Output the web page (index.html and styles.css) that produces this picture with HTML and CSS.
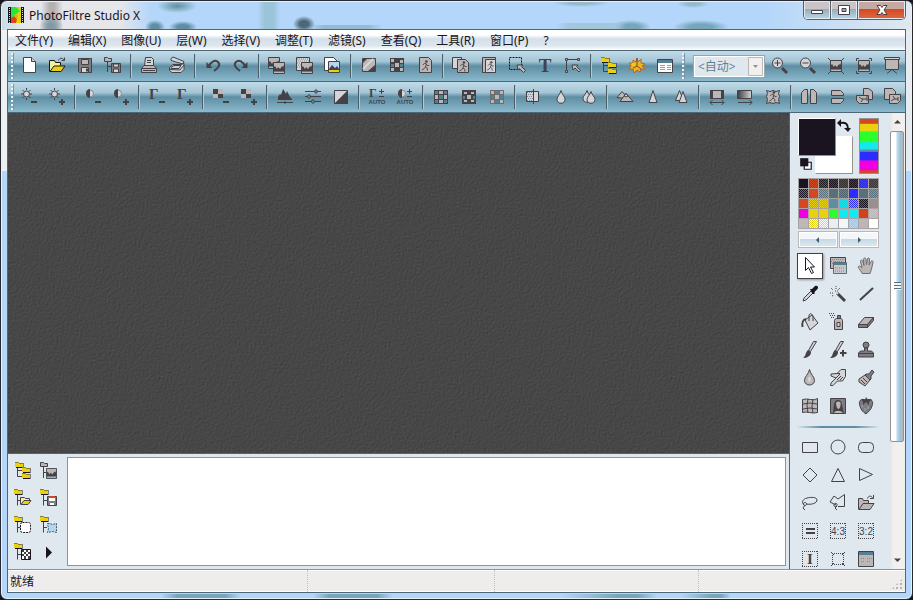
FILE: index.html
```html
<!DOCTYPE html>
<html lang="zh-CN">
<head>
<meta charset="UTF-8" />
<meta name="viewport" content="width=device-width, initial-scale=1.0" />
<title>PhotoFiltre Studio X</title>
<link rel="stylesheet" href="styles.css">
</head>
<body>
<svg class="sprite" aria-hidden="true">
  <defs>
    <linearGradient id="fade" x1="0" x2="1"><stop offset="0" stop-color="#3d3b40"/><stop offset="1" stop-color="#d5d5d8"/></linearGradient>
    <filter id="grain" x="0" y="0" width="100%" height="100%" color-interpolation-filters="sRGB">
      <feTurbulence type="fractalNoise" baseFrequency="0.5" numOctaves="2" seed="4" result="n"/>
      <feDiffuseLighting in="n" surfaceScale="0.3" lighting-color="#646464"><feDistantLight azimuth="225" elevation="45"/></feDiffuseLighting>
    </filter>
  </defs>

  <!-- small parts shared by several icons -->
  <symbol id="man" viewBox="0 0 10 12"><circle class="dark" cx="6" cy="1.6" r="1.4"/><path class="line" d="M2 5.5 4 3.5 6 4.2 5 7.5 7 9V11.5M5 7.5 3.5 9.5 1 11M6 4.5 7 6 9 6"/></symbol>
  <symbol id="pic" viewBox="0 0 12 12"><path d="M.5 .5h11v11H.5z"/><path class="dark" d="M1 9V5l1-1 2 3 1-2 2 2 2-3 1 1 1-2v6z"/><path class="steel" d="M1 9h10v1H1z"/></symbol>
  <symbol id="folder" viewBox="0 0 9 6"><path class="black" d="M1 1h7.500v5H1z"/><path class="yellow-flat" d="M0 .5h3.500l1 1h3.500v3.500H0z"/><path class="shade" d="M0 .5h3.500l1 1h3.500"/></symbol>
  <symbol id="tree-folder" viewBox="0 0 20 20"><use href="#folder" x="1" y="1" width="9" height="6"/><path class="line" d="M4.500 7V17.500M4.500 12.500H8"/></symbol>
  <symbol id="minus" viewBox="0 0 20 20"><path class="dark" d="M12 14h6v2h-6z"/></symbol>
  <symbol id="plus" viewBox="0 0 20 20"><path class="dark" d="M12 14h2v-2h2v2h2v2h-2v2h-2v-2h-2z"/></symbol>

  <!-- file -->
  <symbol id="new" viewBox="0 0 20 20"><path class="white" d="M4.500 1.500h8l4 4v11h-12z"/><path class="pale" d="M12.500 1.500v4h4"/></symbol>
  <symbol id="open" viewBox="0 0 20 20"><path class="cream ink" d="M2.500 15.500v-11h5l1 2h5v3"/><path class="yellow ink" d="m3 15.500 4-5.500h11l-4 5.500z"/><path class="line" d="M11.500 4.500c1-3 4-3 6 0M17.500 1.500v3h-3"/></symbol>
  <symbol id="save" viewBox="0 0 20 20"><path class="mid" d="M3.500 2.500h13v14h-12l-1-1z"/><path d="M6.500 3.500h7v5h-7z"/><path class="pale" d="M6.500 11.500h7v5h-7z"/><path class="dark" d="M11 12.500h2v3h-2z"/></symbol>
  <symbol id="save-tree" viewBox="0 0 20 20"><path d="M1.500 1.500h3l1 1h3v3h-7z"/><path class="line" d="M4.500 6v10M4.500 10.500h4"/><path class="mid" d="M8.500 7.500h9v9h-9z"/><path class="pale" d="M10.500 8h5v3h-5zM10.500 13h5v3.500h-5z"/></symbol>
  <symbol id="print" viewBox="0 0 20 20"><path class="pale" d="m5.500 9.500 1-8h6l2 2v6"/><path class="line" d="M8 4.500h4M8 6.500h4"/><path d="M2.500 12.500 5 9.500h10l2.500 3v4h-15z"/><path class="line" d="M2.500 12.500h15M4 14.500h12"/></symbol>
  <symbol id="scan" viewBox="0 0 20 20"><path class="pale" d="M4 2.500 6 1 17 5.500l-1 2.500L4 4.500z"/><path class="pale" d="M2.500 11.500 6 8.500h8l3-1v6l-3 3h-9l-2.500-2z"/><path class="sky" d="M4 11.500 7 9.500h7l-2 3H4z"/><path class="line" d="m3 13.500 10 .5 4-5"/></symbol>
  <symbol id="undo" viewBox="0 0 20 20"><path class="thick" d="M6 10C8 6 12 3 15 6s0 6-4 9"/><path class="dark" d="M3.500 6v6h6z"/></symbol>
  <symbol id="redo" viewBox="0 0 20 20"><path class="thick" d="M14 10C12 6 8 3 5 6s0 6 4 9"/><path class="dark" d="M16.500 6v6h-6z"/></symbol>

  <!-- image -->
  <symbol id="copy-image" viewBox="0 0 20 20"><use href="#pic" x="1" y="1" width="12" height="12"/><use href="#pic" x="6" y="6" width="12" height="12"/></symbol>
  <symbol id="copy-mask" viewBox="0 0 20 20"><path class="pale" d="M1.500 1.500h13v13h-13z"/><path class="dots soft" d="M2 3h12M3 5h12M2 7h12M3 9h12M2 11h12"/><use href="#pic" x="6" y="6" width="12" height="12"/></symbol>
  <symbol id="paste-image" viewBox="0 0 20 20"><path class="white" d="M1.500 1.500h9l4 4v9h-13z"/><path class="sky" d="M5.500 5.500h11v11h-11z"/><path class="dark" d="m6 13 3-4 3 3 2-2 2 3v1H6z"/><path class="yellow-flat" d="M6 14h10v2H6z"/></symbol>
  <symbol id="gradient" viewBox="0 0 20 20"><path d="M3.500 2.500h13v13h-13z"/><path class="dark" d="M4 3h4L4 7zM16 9v6h-7z"/><path class="pale-line" d="M4 13 14 3"/></symbol>
  <symbol id="squares" viewBox="0 0 20 20"><path class="dark" d="M3 2h14v14H3z"/><path class="flat" d="M4 3h3v3H4zM8 7h4v4H8zM13 4h3v3h-3zM4 12h3v3H4zM13 12h3v3h-3z"/><path class="steel" d="M4 8h3v3H4zM13 8h3v3h-3z"/></symbol>
  <symbol id="automate" viewBox="0 0 20 20"><path d="M4.500 1.500h9l3 3v12h-12z"/><use href="#man" x="5" y="4" width="11" height="11"/></symbol>
  <symbol id="batch" viewBox="0 0 20 20"><path class="pale" d="M1.500 1.500h9v11h-9z"/><path d="M6.500 3.500h8l3 3v10h-11z"/><use href="#man" x="7" y="5" width="10" height="11"/></symbol>
  <symbol id="batch-frame" viewBox="0 0 20 20"><path d="M3.500 1.500h13v15h-13z"/><path class="pale" d="M6.500 3.500h10v13h-10z"/><use href="#man" x="7" y="5" width="9" height="10"/></symbol>
  <symbol id="select-area" viewBox="0 0 20 20"><path class="dash" d="M2.500 1.500h12v12h-12z"/><path d="M10 9h6l-1.500 1.500 4 4-2 2-4-4L11 14z"/></symbol>
  <symbol id="path" viewBox="0 0 20 20"><path class="line" d="M3.500 16V3.500H16"/><path d="M2.500 2.500h2v2h-2zM14.500 2.500h2v2h-2zM2.500 14.500h2v2h-2z"/><path d="M9 9h6l-1.500 1.500 4 4-1.500 1.500-4-4L10 14z"/></symbol>
  <symbol id="explorer" viewBox="0 0 20 20"><use href="#folder" x="2" y="1" width="9" height="6"/><use href="#folder" x="9" y="6" width="9" height="6"/><use href="#folder" x="9" y="12" width="9" height="6"/><path class="line" d="M4.500 7v8.500H9M4.500 9.500H9"/></symbol>
  <symbol id="plugin" viewBox="0 0 20 20"><path class="gold" d="m10 2 1 4 3-3 0 4 4 1-3 2 3 3-4 0-1 3-3-2-3 3-1-4-4 0 2-3-2-3 4 0 0-3 3 2z"/><path class="brown-line" d="M10 2v8l4 3M10 10l-4 2"/><path class="yellow-flat" d="M5 7h3v3H5z"/></symbol>
  <symbol id="layout" viewBox="0 0 20 20"><path class="white" d="M2.500 3.500h15v13h-15z"/><path class="steel" d="M3 4h14v3H3z"/><path class="blue-line" d="M5 9.500h5M5 11.500h5M5 13.500h5M12 9.500h4M12 11.500h4M12 13.500h4"/></symbol>
  <symbol id="zoom-in" viewBox="0 0 20 20"><path class="heavy" d="m12 12 5 5"/><circle class="pale" cx="7.500" cy="7" r="5"/><path class="line" d="M4.500 7h6M7.500 4v6"/></symbol>
  <symbol id="zoom-out" viewBox="0 0 20 20"><path class="heavy" d="m12 12 5 5"/><circle class="pale" cx="7.500" cy="7" r="5"/><path class="line" d="M4.500 7h6"/></symbol>
  <symbol id="fit" viewBox="0 0 20 20"><use href="#pic" x="4" y="4" width="12" height="12"/><path class="line" d="m2 2 3 3M18 2l-3 3M2 18l3-3M18 18l-3-3"/></symbol>
  <symbol id="full" viewBox="0 0 20 20"><use href="#pic" x="4" y="4" width="12" height="12"/><path class="line" d="M2.500 5V2.500H5M15 2.500h2.500V5M2.500 15v2.500H5M15 17.500h2.500V15"/></symbol>
  <symbol id="slideshow" viewBox="0 0 20 20"><path d="M3.500 3.500h13v10h-13z"/><path class="pale" d="M2.500 1.500h15v2h-15z"/><path class="line" d="m10 13.500-5 4M10 13.500l5 4"/></symbol>

  <!-- adjust -->
  <symbol id="sun" viewBox="0 0 20 20"><circle class="pale" cx="7.500" cy="7" r="3"/><path class="line" d="M7.500 1v2M7.500 11v2M2 7h2M11 7h2M3.500 3 5 4.500M11.500 3 10 4.500M3.500 11 5 9.500M11.500 11 10 9.500"/></symbol>
  <symbol id="half" viewBox="0 0 20 20"><circle class="pale thin" cx="7" cy="6.500" r="3.500"/><path class="dark" d="M7 2a4 4.500 0 0 0 0 9z"/></symbol>
  <symbol id="tiles" viewBox="0 0 20 20"><path class="dark" d="M2 2h5v5H2zM7 7h5v4H7z"/><path class="flat" d="M7 2h5v5H7zM2 7h5v4H2z"/></symbol>
  <symbol id="histogram" viewBox="0 0 20 20"><path class="dark" d="M3 13V10l2-3 1 1 2-6 2 3 1 2 1-3 2 4 1 2 2 2v1z"/><path class="line" d="M2 15.500h16M10 14v3"/></symbol>
  <symbol id="levels" viewBox="0 0 20 20"><path class="line" d="M2 4.500h16M2 9.500h16M2 14.500h16"/><path d="M12 3h2v3h-2zM5 8h2v3H5zM9 13h2v3H9z"/></symbol>
  <symbol id="contrast" viewBox="0 0 20 20"><path class="pale" d="M3.500 3.500h13v13h-13z"/><path class="dark" d="M17 3v14H3z"/></symbol>
  <symbol id="auto-sign" viewBox="0 0 20 20"><path class="line" d="M12 4.500h5M14.500 2v5M12 9.500h5"/></symbol>
  <symbol id="grid-a" viewBox="0 0 20 20"><path class="dark" d="M3 3h14v14H3z"/><path class="steel" d="M4 4h3v3H4zM13 4h3v3h-3zM8 8h4v4H8zM4 13h3v3H4zM13 13h3v3h-3z"/><path class="flat" d="M8 4h4v3H8zM4 8h3v4H4zM13 8h3v4h-3zM8 13h4v3H8z"/></symbol>
  <symbol id="grid-b" viewBox="0 0 20 20"><path class="dark" d="M3 3h14v14H3z"/><path class="flat" d="M5 5h3v2H5zM12 5h3v2h-3zM8 8h4v4H8zM5 13h3v2H5zM12 13h3v2h-3z"/><path class="steel" d="M4 9h2v3H4zM14 9h2v3h-2z"/></symbol>
  <symbol id="grid-c" viewBox="0 0 20 20"><path class="mid-flat" d="M3 3h14v14H3z"/><path class="flat" d="M4 4h3v3H4zM13 4h3v3h-3zM8 8h4v4H8zM4 13h3v3H4zM13 13h3v3h-3z"/><path class="steel" d="M8 4h4v3H8zM4 8h3v4H4zM13 8h3v4h-3zM8 13h4v3H8z"/></symbol>

  <!-- filters -->
  <symbol id="gray" viewBox="0 0 20 20"><path class="pale" d="M3.500 4.500h12v10h-12z"/><path class="dots soft" d="M4 5.500h6M5 7.500h5M4 9.500h6M5 11.500h5M4 13.500h6"/><path class="line" d="M10.500 2v15"/></symbol>
  <symbol id="drop" viewBox="0 0 20 20"><path class="pale" d="M10 3.500c1 4 4 6 4 9 0 5-8 5-8 0 0-3 3-5 4-9z"/></symbol>
  <symbol id="drops" viewBox="0 0 20 20"><path class="pale" d="M8 3.500c1 4 4 5 4 8 0 5-8 5-8 0 0-3 3-4 4-8z"/><path class="pale" d="M12 4.500c1 4 4 5 4 8 0 5-8 5-8 0 0-3 3-4 4-8z"/></symbol>
  <symbol id="hills" viewBox="0 0 20 20"><path d="m2 10.500 5-6 6 7z"/><path d="m5 14.500 6-8 7 8z"/><path class="pale" d="m9 9 2-2.500L13 9l-2 1z"/></symbol>
  <symbol id="peak" viewBox="0 0 20 20"><path class="pale" d="m6 15.500 4-12 4 12z"/></symbol>
  <symbol id="peaks" viewBox="0 0 20 20"><path class="pale" d="m4.500 13.500 4-10 4 10z"/><path class="pale" d="m8 15.500 4-11 4 11z"/></symbol>
  <symbol id="mirror" viewBox="0 0 20 20"><path d="M3.500 3.500h13v8h-13z"/><path class="dark" d="M3 3h3v9H3zM14 3h3v9h-3z"/><path class="line" d="M3 15.500h14M5.500 13 3 15.500 5.500 18M14.500 13l2.500 2.500-2.500 2.500"/></symbol>
  <symbol id="blend" viewBox="0 0 20 20"><path fill="url(#fade)" d="M2.500 3.500h14v8h-14z"/><path class="line" d="M3 15.500h14M14.500 13l2.500 2.500-2.500 2.500"/></symbol>
  <symbol id="warp" viewBox="0 0 20 20"><path d="M3.500 3.500 7 4.500l3-1 3 1 3.500-1-1 3 1 3-1 3 1 4-3.500-1-3 1-3-1-3.500 1 1-4-1-3 1-3z"/><use href="#man" x="5" y="4" width="10" height="11"/></symbol>
  <symbol id="flip-h" viewBox="0 0 20 20"><path d="M8.500 2.500v14h-6v-11l3-3zM11.500 2.500v14h6v-11l-3-3z"/></symbol>
  <symbol id="flip-v" viewBox="0 0 20 20"><path d="M4.500 3.500h9l3 3v2h-12zM4.500 11.500h12v2l-3 3h-9z"/></symbol>
  <symbol id="rotate-l" viewBox="0 0 20 20"><path d="M8.500 1.500h5l4 3v8h-9z"/><path d="M1.500 8.500h12v8h-9l-3-3z"/><path class="line" d="m4 10 3 2h5M6 15l2-3M12 9v5"/></symbol>
  <symbol id="rotate-r" viewBox="0 0 20 20"><path d="M1.500 1.500h8l3 3v8h-11z"/><path d="M6.500 7.500h11v6l-3 3h-8z"/><path class="line" d="m8 14 3-2h4M10 9l2 3M15 10v4"/></symbol>

  <!-- tools -->
  <symbol id="arrow" viewBox="0 0 20 20"><path class="white ink" d="M5.500 1.500v13l3-3 3 6 2-1-3-5.500h4z"/></symbol>
  <symbol id="layers" viewBox="0 0 20 20"><path d="M2.500 1.500h15v11h-15z"/><path class="dots soft" d="M4 3.500h12M3 5.500h12M4 7.500h12"/><path class="flat-pale" d="M5.500 6.500h13v11h-13z"/><path class="steel" d="M6 7h12v2H6z"/><path class="dots soft" d="M7 12h5M7 15h5M13 12h4M13 15h4"/></symbol>
  <symbol id="hand" viewBox="0 0 20 20"><path class="hand-fill" d="M6 17.500C5 14 1.500 12 2.500 10.500S5 11 6 12L4.500 5.500c0-2 2-2 2.500 0l1 4-.5-6c0-2 2.500-2 2.500 0l.5 5 1-5.500c.5-2 2.500-1 2 1l-.5 5L15 5.500c1-1.500 2.500-.5 2 1L15.500 13 14 17.500z"/></symbol>
  <symbol id="picker" viewBox="0 0 20 20"><path class="pale" d="m3 17 1-3 7-7 2 2-7 7z"/><path class="black" d="m10 5 2 0 3-3c2-1 4 1 2.500 3l-3 3v2l-2 0z"/></symbol>
  <symbol id="wand" viewBox="0 0 20 20"><path class="heavy" d="m9 9 8 8"/><path class="pale-line" d="m8 8 2 2"/><path class="dots" d="M8 2v3M3 4l2 2M2 9h3M12 4l-2 2M4 12l2-1M7 7h3"/></symbol>
  <symbol id="line" viewBox="0 0 20 20"><path class="thick" d="M4 16 17 4"/></symbol>
  <symbol id="bucket" viewBox="0 0 20 20"><path class="pale" d="m5 8 7-5 6 8-8 7z"/><path class="line" d="M9 9V3c2-3 4 0 4 2v4"/><path class="thick" d="M6 7c-4 1-4 4-3.500 8"/></symbol>
  <symbol id="spray" viewBox="0 0 20 20"><path d="M6.500 8.500c0-1 1-2 2-2h4c1 0 2 1 2 2v9h-8z"/><path class="mid" d="M9.500 3.500h3v3h-3z"/><path class="pale" d="M9 10.500h3v4H9z"/><path class="dots" d="M1 1.500h6M2 3.500h6M3 5.500h4"/></symbol>
  <symbol id="eraser" viewBox="0 0 20 20"><path d="m2.500 12.500 6-7h9l-6 7z"/><path class="mid" d="M2.500 12.500h9v3h-9zM11.500 15.500l6-7v-3l-6 7z"/></symbol>
  <symbol id="brush" viewBox="0 0 20 20"><path class="pale" d="m8.500 10.500 5-9 3 0-6 10z"/><path class="dark" d="m8 10 3 2c0 4-4 6-8 6 3-2 2-5 5-8z"/></symbol>
  <symbol id="brush-plus" viewBox="0 0 20 20"><use href="#brush" width="20" height="20" x="-1"/><path class="dark" d="M12 12h2v-2h2v2h2.500v2H16v2.500h-2V14h-2z"/></symbol>
  <symbol id="stamp" viewBox="0 0 20 20"><circle class="mid" cx="10" cy="5" r="3"/><path class="mid" d="M8.500 8v3h-4l-2 2v4h15v-4l-2-2h-4V8z"/><path class="line" d="M3 13.500h14"/></symbol>
  <symbol id="blur" viewBox="0 0 20 20"><path d="M9.500 1.500c1 5 5 7 5 11 0 6-10 6-10 0 0-4 4-6 5-11z"/><path class="pale-line" d="M9.500 9v5M8 11h3"/></symbol>
  <symbol id="smudge" viewBox="0 0 20 20"><path class="pale" d="M2.500 17.500 3 15l5-5-5-2V6l6-.5 4-4h4.500v7l-3 4.500h-5l-4.500 4.500z"/><path class="line" d="m8 10 4-4M9 12l4-4M12 12l3-3M9 5.500h3"/></symbol>
  <symbol id="art-brush" viewBox="0 0 20 20"><path d="m3 11 6-4 5 5-5 6-6-4z"/><path class="mid" d="m10 6 3 0 3-4 2 2-3 4v3l-1 1-5-5z"/><path class="line" d="m5 12 4 4M7 10l4 4"/></symbol>
  <symbol id="mesh" viewBox="0 0 20 20"><path d="M2.500 3.500q4-1 8 0t7-1v14q-4 1-8 0t-7 0z"/><path class="line" d="M8 3q-2 6 0 14M13 3q-2 7 0 14M3 8q7-2 14 0M3 13q7-2 14 0"/></symbol>
  <symbol id="portrait" viewBox="0 0 20 20"><path class="mid" d="M2.500 2.500h15v15h-15z"/><path class="dark" d="M5 17c1-5 0-13 5-13s4 8 6 13z"/><path class="flat" d="M8 7c1-2 4-2 4.500 0s-.5 6-2 6S8 9 8 7zM6 17c1-3 7-3 9 0z"/></symbol>
  <symbol id="berry" viewBox="0 0 20 20"><path class="mid" d="M10 4c5-2 8 1 6 6-1 4-4 6-6 8-3-2-5-4-6-8C2 5 5 2 10 4z"/><path class="dark" d="m5 3 4 1 1-3 2 3 4-1-3 3 0 3-3-3-3 3V6z"/><path class="steel-line" d="M6 9v3M9 12v3M12 10v3"/></symbol>

  <!-- shapes -->
  <symbol id="rect" viewBox="0 0 20 20"><path class="line" d="M2.500 5.500h15v10h-15z"/></symbol>
  <symbol id="ellipse" viewBox="0 0 20 20"><circle class="line" cx="10" cy="10" r="7"/></symbol>
  <symbol id="round-rect" viewBox="0 0 20 20"><rect class="line" x="2.500" y="5.500" width="15" height="10" rx="4"/></symbol>
  <symbol id="diamond" viewBox="0 0 20 20"><path class="line" d="m10 3 7 7-7 7-7-7z"/></symbol>
  <symbol id="triangle" viewBox="0 0 20 20"><path class="line" d="m10 3.500 6.500 13h-13z"/></symbol>
  <symbol id="triangle-r" viewBox="0 0 20 20"><path class="line" d="M3.500 3.500v12l13-6z"/></symbol>
  <symbol id="lasso" viewBox="0 0 20 20"><path class="line" d="M4 12C1 9 3 6 7 5s10-1 10 2-5 5-11 4M5 9.500c-2 0-2 3 0 3s2-3 0-3zM5 12l-2 3 2 2"/></symbol>
  <symbol id="polygon" viewBox="0 0 20 20"><path class="line" d="m8 12-6-3 4-6 4 3 6.500-4.500v12H10M7 10.500c-2 1-1 4 1 3s1-4-1-3zM9 13l-2 2 2 2"/></symbol>
  <symbol id="open-shape" viewBox="0 0 20 20"><path d="M2.500 16.500v-11h4l1 2h5v3"/><path d="m3 16.500 4-6h11l-4 6z"/><path class="line" d="M11.500 5.500c1-3 3-3 5-1M17.500 2v3.500H14"/></symbol>
  <symbol id="frame" viewBox="0 0 20 20"><path class="dots-frame" d="M2 2.500h16M2 17.500h16M2.500 2v16M17.500 2v16"/></symbol>
  <symbol id="equal" viewBox="0 0 20 20"><use href="#frame" width="20" height="20"/><path class="dark" d="M6 7h9v2H6zM6 11h9v2H6z"/></symbol>
  <symbol id="transform" viewBox="0 0 20 20"><path class="dots-frame" d="M4 4.500h12M4 15.500h12M4.500 4v12M15.500 4v12"/><path class="line" d="m3 3 3 3M17 3l-3 3M3 17l3-3M17 17l-3-3"/></symbol>
  <symbol id="options" viewBox="0 0 20 20"><path d="M2.500 2.500h15v15h-15z"/><path class="steel" d="M3 3h14v3H3z"/><path class="dots soft" d="M5 9.500h4M5 12.500h4M11 9.500h5M11 12.500h4"/></symbol>

  <!-- explorer panel -->
  <symbol id="tree-image" viewBox="0 0 20 20"><path d="M1.500 1.500h3l1 1h3v3h-7z"/><path class="line" d="M4.500 6v11M4.500 11.500h4"/><use href="#pic" x="7" y="7" width="11" height="11"/></symbol>
  <symbol id="tree-open" viewBox="0 0 20 20"><use href="#tree-folder" width="20" height="20"/><path class="cream" d="M7.500 16.500v-7h4l1 1h4v2"/><path class="yellow" d="m8 16.500 3-4h7l-3 4z"/></symbol>
  <symbol id="tree-save" viewBox="0 0 20 20"><use href="#tree-folder" width="20" height="20"/><path class="mid" d="M8.500 8.500h9v9h-9z"/><path class="white-flat" d="M10 9h6v4h-6zM11 15h4v2h-4z"/><path class="red-line" d="M10 9h6"/></symbol>
  <symbol id="tree-select" viewBox="0 0 20 20"><use href="#tree-folder" width="20" height="20"/><rect class="dash white-fill" x="7.500" y="7.500" width="10" height="10" rx="2"/></symbol>
  <symbol id="tree-shape" viewBox="0 0 20 20"><use href="#tree-folder" width="20" height="20"/><path class="sky dash-line" d="m8.500 8.500 2 0 3 1 4-1v9l-4-1-5 1 1-4z"/></symbol>
  <symbol id="tree-pattern" viewBox="0 0 20 20"><use href="#tree-folder" width="20" height="20"/><path class="white ink" d="M8.500 7.500h9v10h-9z"/><path class="dark" d="M9 8h2v2H9zM13 8h2v2h-2zM11 10h2v2h-2zM15 10h2v2h-2zM9 12h2v2H9zM13 12h2v2h-2zM11 14h2v3h-2zM15 14h2v3h-2z"/></symbol>
  <symbol id="play" viewBox="0 0 20 20"><path class="black" d="M7 4.500 13 10.500 7 16.500z"/></symbol>
  <symbol id="swap" viewBox="0 0 16 16"><path class="black" d="m1 5 4-4v8zM8 10h7l-3 4z"/><path class="swap-line" d="M4 5c6-1 8 1 8 6"/></symbol>
  <symbol id="default-colors" viewBox="0 0 12 12"><path class="white ink" d="M4.500 4.500h6v6h-6z"/><path class="black" d="M1 1h7v7H1z"/></symbol>
</svg>

<div class="window">
  <header class="titlebar">
    <svg class="app-icon" viewBox="0 0 16 16" aria-hidden="true">
      <path fill="#1a1420" d="M0 0h16v16H0z"/><path fill="#e3d313" d="M3 0h10v16H3z"/><path fill="#25e83b" d="M3 0h5l4 4-5 4-4 3z"/><path fill="#dd461d" d="m3 11 3-2 3 3-1 4H3z"/><path fill="#e9a91c" d="m7 7 3 1-1 4-3-3z"/><path class="film" d="M1.500 1v15M14.500 1v15"/>
    </svg>
    <h1>PhotoFiltre Studio X</h1>
    <div class="window-buttons">
      <button class="win-btn" aria-label="最小化"><svg viewBox="0 0 14 12"><path class="white" d="M1.500 6.500h11v3h-11z"/></svg></button>
      <button class="win-btn" aria-label="最大化"><svg viewBox="0 0 14 12"><path class="white" fill-rule="evenodd" d="M1.500 1.500h11v9h-11zM5 4.500v3h4v-3z"/></svg></button>
      <button class="win-btn win-close" aria-label="关闭"><svg viewBox="0 0 14 12"><path class="white" d="M2 1.500h3.500L7 3.500l1.500-2H12L9 6l3 4.500H8.500L7 8.500l-1.500 2H2L5 6z"/></svg></button>
    </div>
  </header>

  <div class="client">
    <nav class="menubar">
      <a href="#">文件(Y)</a>
      <a href="#">编辑(X)</a>
      <a href="#">图像(U)</a>
      <a href="#">层(W)</a>
      <a href="#">选择(V)</a>
      <a href="#">调整(T)</a>
      <a href="#">滤镜(S)</a>
      <a href="#">查看(Q)</a>
      <a href="#">工具(R)</a>
      <a href="#">窗口(P)</a>
      <a href="#">?</a>
    </nav>

    <div class="toolbar" data-icons="new open save save-tree | print scan | undo redo | copy-image copy-mask paste-image | gradient squares automate | batch batch-frame select-area text path | explorer plugin layout">
      <span class="grip"></span>
      <div class="toolbar-items"></div>
      <span class="grip"></span>
      <div class="zoom-select">
        <select aria-label="缩放"><option>&lt;自动&gt;</option></select>
        <svg class="drop-arrow" viewBox="0 0 15 19" aria-hidden="true"><path class="box" d="M.5 .5h14v18H.5z"/><path class="box-arrow" d="M5 8h5l-2.500 3z"/></svg>
      </div>
      <div class="toolbar-items" data-icons="zoom-in zoom-out fit full slideshow"></div>
    </div>
    <div class="toolbar toolbar-second" data-icons="sun+minus sun+plus | half+minus half+plus | gamma+minus gamma+plus | tiles+minus tiles+plus | histogram levels contrast | auto-gamma+auto-sign half+auto-sign+auto | grid-a grid-b grid-c | gray drop drops | hills peak peaks | mirror blend warp | flip-h flip-v rotate-l rotate-r">
      <span class="grip"></span>
      <div class="toolbar-items"></div>
    </div>

    <div class="main">
      <div class="left">
        <main class="workspace"><svg class="texture" aria-hidden="true"><rect width="100%" height="100%" filter="url(#grain)"/></svg></main>
        <section class="explorer">
          <div class="explorer-tools" data-icons="explorer tree-image tree-open tree-save tree-select tree-shape tree-pattern play"></div>
          <div class="explorer-list"></div>
        </section>
      </div>

      <aside class="side">
        <div class="palette-panel">
          <div class="colors">
            <div class="swatches">
              <button class="swatch swatch-back" aria-label="背景色"></button>
              <button class="swatch swatch-front" aria-label="前景色"></button>
              <button class="swap" aria-label="交换"><svg viewBox="0 0 16 16"><use href="#swap"/></svg></button>
              <button class="reset" aria-label="默认"><svg viewBox="0 0 12 12"><use href="#default-colors"/></svg></button>
            </div>
            <div class="spectrum"></div>
          </div>
          <div class="palette" id="palette"></div>
          <div class="pager">
            <button aria-label="上一个"><svg viewBox="0 0 10 10"><path class="slate" d="M6 2v6L3 5z"/></svg></button>
            <button aria-label="下一个"><svg viewBox="0 0 10 10"><path class="slate" d="M4 2v6l3-3z"/></svg></button>
          </div>
          <div class="tools" id="tools" data-icons="arrow layers hand picker wand line bucket spray eraser brush brush-plus stamp blur smudge art-brush mesh portrait berry"></div>
          <hr>
          <div class="tools" data-icons="rect ellipse round-rect diamond triangle triangle-r lasso polygon open-shape equal frame+ratio43 frame+ratio32 frame+manual transform options"></div>
        </div>
        <div class="scrollbar">
          <button aria-label="向上"><svg viewBox="0 0 10 10"><path class="dark" d="M2 6.500h7L5.500 3z"/></svg></button>
          <div class="track"><div class="thumb"><span></span></div></div>
          <button aria-label="向下"><svg viewBox="0 0 10 10"><path class="dark" d="M2 3.500h7L5.500 7z"/></svg></button>
        </div>
      </aside>
    </div>

    <footer class="statusbar">
      <span>就绪</span><span></span><span></span><span></span>
    </footer>
  </div>
</div>

<script>
  // Colour pairs: the second one is dithered over the first
  const paletteColors = [
    ['#1a1420'], ['#d5481f', '#6f4a44'], ['#222024', '#555'], ['#1a1420', '#4a484e'], ['#333', '#4e4e52'], ['#1a1420', '#2a2ee8'], ['#2b2be0', '#55536a'], ['#39373b', '#555'],
    ['#1a1420', '#d5481f'], ['#d5481f'], ['#56707c', '#a49a98'], ['#56707c'], ['#48606c', '#5f8ea2'], ['#2b2cff'], ['#56707c'], ['#56707c', '#999390'],
    ['#d5481f'], ['#e8d20f', '#e8832a'], ['#e8d20f', '#3be83b'], ['#5f8ea2'], ['#14e3ee', '#5fb0c4'], ['#2b2cff', '#7fb0ee'], ['#1a1420', '#ee00e0'], ['#96918f'],
    ['#f000e0'], ['#e8d20f'], ['#e8d20f'], ['#2bff2b'], ['#14e8f0'], ['#14e8f0'], ['#d5481f', '#6b605c'], ['#bcb6b6', '#c8c4c4'],
    ['#bcb6b6', '#c8b2c4'], ['#e8d20f', '#fff'], ['#fff', '#e8d93a'], ['#e8eff2'], ['#f1f6f9'], ['#b3d6f3', '#a2c8e0'], ['#bcb6b6'], ['#fff']
  ];

  // Icons made of letters
  const auto = '<text class="tiny" x="10" y="17" text-anchor="middle">AUTO</text>';
  const textIcons = {
    'text': '<text class="glyph" x="10" y="16" font-size="19" text-anchor="middle">T</text>',
    'gamma': '<text class="glyph" x="2" y="12" font-size="15">Γ</text>',
    'auto-gamma': '<text class="glyph" x="2" y="10" font-size="12">Γ</text>' + auto,
    'auto': auto,
    'ratio43': '<text class="ratio" x="10" y="13.500" text-anchor="middle">4:3</text>',
    'ratio32': '<text class="ratio" x="10" y="13.500" text-anchor="middle">3:2</text>',
    'manual': '<text class="glyph" x="10" y="15" font-size="15" text-anchor="middle">I</text>'
  };

  // Fill a container with icon buttons, "|" makes a separator, "+" stacks parts
  function fillIcons(target, icons) {
    icons.split(' ').forEach(name => {
      if (name === '|') {
        const sep = document.createElement('span');
        sep.className = 'sep';
        target.appendChild(sep);
        return;
      }
      const parts = name.split('+').map(id => textIcons[id] || `<use href="#${id}"/>`);
      const btn = document.createElement('button');
      btn.className = 'tool';
      btn.setAttribute('aria-label', name);
      btn.innerHTML = `<svg viewBox="0 0 20 20" aria-hidden="true">${parts.join('')}</svg>`;
      target.appendChild(btn);
    });
  }

  document.querySelectorAll('[data-icons]').forEach(el => {
    const target = el.classList.contains('toolbar') ? el.querySelector('.toolbar-items') : el;
    fillIcons(target, el.dataset.icons);
  });

  const palette = document.getElementById('palette');
  paletteColors.forEach(([base, dither]) => {
    const cell = document.createElement('button');
    cell.setAttribute('aria-label', base);
    cell.style.backgroundColor = base;
    if (dither) {
      cell.style.backgroundImage = `conic-gradient(${dither} 25%, transparent 0 50%, ${dither} 0 75%, transparent 0)`;
    }
    palette.appendChild(cell);
  });

  const tools = document.getElementById('tools');
  tools.firstChild.classList.add('active');
  tools.addEventListener('click', e => {
    const btn = e.target.closest('.tool');
    if (!btn) return;
    tools.querySelector('.active').classList.remove('active');
    btn.classList.add('active');
  });
</script>
</body>
</html>
```

FILE: styles.css
```css
* {
  box-sizing: border-box;
}

body {
  margin: 0;
  background: #1a1420;
  color: #1a1420;
  font-family: "Noto Sans", "Noto Sans CJK SC", sans-serif;
  font-size: 12px;
}

button {
  margin: 0;
  padding: 0;
  border: none;
  background: none;
  font: inherit;
}

.sprite {
  position: absolute;
  width: 0;
  height: 0;
}

/* Window frame */
.window {
  display: flex;
  flex-direction: column;
  height: 100vh;
  padding: 0 6px 6px;
  border: 1px solid #2b2930;
  border-radius: 7px;
  box-shadow: inset 0 0 0 1px #e4f2fb;
  background:
    radial-gradient(ellipse 20px 7px at 176px 5px, #5f8ea2, #8ab2c6 50%, transparent),
    radial-gradient(ellipse 10px 7px at 154px 26px, #5f8ea2 40%, transparent),
    radial-gradient(ellipse 14px 6px at 182px 26px, #5f8ea2 40%, transparent),
    radial-gradient(ellipse 11px 8px at 303px 23px, #4c6876 40%, transparent),
    linear-gradient(to right, transparent, #9cc4d8 30% 70%, transparent) no-repeat 257px 0 / 22px 29px,
    radial-gradient(ellipse 12px 10px at 50px 25px, #7f9aa6 20%, transparent),
    linear-gradient(to right, transparent, #b5b0b2 40% 60%, transparent) no-repeat 40px 0 / 22px 29px,
    linear-gradient(to right, transparent, #93bccf 20% 80%, transparent) no-repeat 308px 24px / 74px 5px,
    linear-gradient(to right, transparent, #a2c6da 20% 80%, transparent) no-repeat 555px 22px / 70px 7px,
    radial-gradient(ellipse 20px 7px at 630px 26px, #76a6ba 40%, transparent),
    radial-gradient(ellipse 28px 7px at 700px 26px, #76a6ba 40%, transparent),
    radial-gradient(ellipse 28px 4px at 580px 2px, #93bccf 40%, transparent),
    radial-gradient(ellipse 16px 4px at 692px 3px, #93bccf 40%, transparent),
    linear-gradient(to right, #c5dae6, #e4e6ea 20px 120px, transparent 150px) no-repeat 0 0 / 100% 29px,
    linear-gradient(to left, #dfe8ee 0, transparent 150px) no-repeat 0 0 / 100% 30px,
    linear-gradient(#eef1f3 0 170px, transparent 170px) no-repeat 0 0 / 7px 100%,
    linear-gradient(#e5ebef 0 170px, transparent 170px) no-repeat 100% 0 / 7px 100%,
    linear-gradient(to right, transparent, #76a6ba 20% 80%, transparent) no-repeat 160px 100% / 80px 5px,
    linear-gradient(to right, transparent, #76a6ba 20% 80%, transparent) no-repeat 312px 100% / 80px 5px,
    linear-gradient(to right, transparent, #76a6ba 60% 80%, transparent) no-repeat 560px 100% / 96px 5px,
    linear-gradient(to right, transparent, #76a6ba 60% 80%, transparent) no-repeat 680px 100% / 50px 5px,
    #b3d6fa;
}

.titlebar {
  display: flex;
  align-items: center;
  flex: none;
  height: 28px;
}

.app-icon {
  width: 16px;
  height: 16px;
  margin: 0 5px 0 1px;
  stroke: none;
}

.titlebar h1 {
  flex: 1;
  margin: 0;
  font-size: 12px;
  font-weight: normal;
}

.window-buttons {
  display: flex;
  align-self: flex-start;
  border: 1px solid #56606a;
  border-top: none;
  border-radius: 0 0 5px 5px;
  overflow: hidden;
}

.win-btn {
  display: grid;
  place-items: center;
  width: 27px;
  height: 18px;
  border-right: 1px solid #56606a;
  background: linear-gradient(#c9c4c6 0 45%, #98a9b4 45%, #b9d9ec);
  box-shadow: inset 0 0 0 1px #e3e9ee;
}

.win-btn svg {
  width: 14px;
  height: 12px;
}

.win-close {
  width: 47px;
  border-right: none;
  background: linear-gradient(#c7a9a4 0 45%, #d5481f 45%, #d96a44);
}

/* Client area */
.client {
  display: flex;
  flex-direction: column;
  flex: 1;
  min-height: 0;
  border: 1px solid #4c6876;
  background: #dfe8ee;
}

.menubar {
  display: flex;
  align-items: center;
  flex: none;
  gap: 15px;
  height: 21px;
  padding-left: 7px;
  border-bottom: 1px solid #4c6876;
  background: linear-gradient(#fff 0 25%, #d3dfe9 45%, #dfe7ee 80%, #fff);
}

.menubar a {
  color: #1a1420;
  text-decoration: none;
  white-space: nowrap;
}

/* Toolbars */
.toolbar {
  display: flex;
  align-items: center;
  flex: none;
  height: 31px;
  border-bottom: 1px solid #4c6876;
  background: linear-gradient(#c2dbe8, #a3c5d6 35%, #5f8ea2 50%, #7dacc0 85%, #8cbbcf);
  overflow: hidden;
}

.toolbar-second {
  padding-bottom: 1px;
}

.toolbar-items {
  display: flex;
  flex: none;
  align-items: center;
}

.grip {
  flex: none;
  width: 3px;
  height: 26px;
  margin: 0 1px 0 3px;
  background: repeating-linear-gradient(#eef4f7 0 2px, transparent 2px 4px);
  border-right: 1px solid #7797a6;
}

.sep {
  width: 2px;
  height: 24px;
  margin: 0 3px;
  border-left: 1px solid #4c5f69;
  border-right: 1px solid #a9cbdc;
}

.tool {
  display: grid;
  place-items: center;
  width: 28px;
  height: 28px;
}

.tool svg {
  width: 20px;
  height: 20px;
}

.zoom-select {
  display: grid;
  grid-template-columns: 1fr 15px;
  align-items: center;
  flex: none;
  width: 72px;
  height: 23px;
  margin: 0 1px 0 7px;
  padding-right: 1px;
  border: 1px solid #96a6ae;
  box-shadow: inset 0 0 0 1px #fff;
  background: #dfe8ee;
}

.zoom-select select {
  grid-area: 1 / 1 / 2 / 3;
  width: 100%;
  padding: 0 4px;
  border: none;
  appearance: none;
  background: none;
  color: #5f7f90;
  font: inherit;
}

.drop-arrow {
  grid-area: 1 / 2;
  width: 15px;
  height: 19px;
  pointer-events: none;
}

/* Icon parts */
svg {
  display: block;
  fill: #bcb6b6;
  stroke: #444247;
  stroke-width: 1;
}

.dark { fill: #444247; stroke: none; }
.black { fill: #1a1420; stroke: none; }
.slate { fill: #3f5b6a; stroke: none; }
.mid { fill: #7e7c80; }
.mid-flat { fill: #6e6c70; stroke: none; }
.flat { fill: #bcb6b6; stroke: none; }
.flat-pale { fill: #c8c6c8; stroke: #56707c; }
.hand-fill { fill: #bcb6b6; stroke: #6e6c70; }
.pale { fill: #d3d5d8; }
.white { fill: #fff; }
.white-flat { fill: #fff; stroke: none; }
.steel { fill: #56808f; stroke: none; }
.sky { fill: #b3d6f3; }
.yellow { fill: #e8d20f; }
.yellow-flat { fill: #e8d20f; stroke: none; }
.cream { fill: #f3eea0; }
.gold { fill: #e8b52a; stroke: #b06a20; }
.ink { stroke: #1a1420; }
.thin { stroke: #8e8c90; }
.soft { stroke: #7e8c94; }
.box { fill: #f1f0ee; stroke: #bcb6b6; }
.box-arrow { fill: #96918f; stroke: none; }
.line { fill: none; }
.shade { fill: none; stroke: #8a7e20; }
.thick { fill: none; stroke-width: 2; }
.heavy { fill: none; stroke-width: 3; }
.pale-line { fill: none; stroke: #cfd8dc; stroke-width: 2; }
.steel-line { fill: none; stroke: #8fb0bf; }
.blue-line { fill: none; stroke: #7fa9bd; }
.swap-line { fill: none; stroke: #1a1420; stroke-width: 2; }
.brown-line { fill: none; stroke: #8a4a20; }
.red-line { fill: none; stroke: #d5481f; stroke-width: 2; }
.dash { fill: none; stroke: #1a1420; stroke-dasharray: 2 1; }
.dash-line { stroke: #3f5b6a; stroke-dasharray: 2 1; }
.dots { stroke-dasharray: 1 1; }
.dots-frame { fill: none; stroke-dasharray: 1 1; }
.white-fill { fill: #fff; }
.film { stroke: #d8d8d8; stroke-width: 1; stroke-dasharray: 1 1; }

.glyph {
  fill: #444247;
  stroke: none;
  font-family: "Liberation Serif", serif;
  font-weight: bold;
}

.tiny {
  fill: #444247;
  stroke: none;
  font: bold 6px "Liberation Sans", sans-serif;
}

.ratio {
  fill: #444247;
  stroke: none;
  font: 10px "Liberation Sans", sans-serif;
}

/* Workspace and explorer */
.main {
  display: flex;
  flex: 1;
  min-height: 0;
}

.left {
  display: flex;
  flex-direction: column;
  flex: 1;
  min-width: 0;
}

.workspace {
  flex: 1;
  min-height: 0;
  background: #464646;
  overflow: hidden;
}

.texture {
  width: 100%;
  height: 100%;
}

.explorer {
  display: flex;
  flex: none;
  gap: 5px;
  padding: 3px 3px 3px 2px;
  border-top: 1px solid #4c6876;
}

.explorer-tools {
  display: grid;
  grid-template-columns: 26px 26px;
  grid-auto-rows: 27px;
  padding-bottom: 1px;
}

.explorer-tools .tool {
  width: 26px;
  height: 27px;
}

.explorer-list {
  flex: 1;
  border: 1px solid #96918f;
  background: #fff;
}

/* Right panel */
.side {
  display: flex;
  flex: none;
  width: 116px;
  border-left: 1px solid #4c6876;
  overflow: hidden;
}

.palette-panel {
  flex: 1;
  padding: 5px 9px 0 6px;
  overflow: hidden;
}

.colors {
  display: flex;
  justify-content: space-between;
  height: 56px;
  margin: 0 1px 4px 2px;
}

/* The two swatches overlap each other */
.swatches {
  position: relative;
  width: 56px;
}

.swatch {
  position: absolute;
  width: 38px;
  height: 38px;
  border: 1px solid #96918f;
  border-top-color: #fff;
  border-left-color: #fff;
}

.swatch-front {
  left: 0;
  top: 0;
  background: #1a1420;
}

.swatch-back {
  right: 1px;
  bottom: 0;
  background: #fff;
}

.swap {
  position: absolute;
  right: 2px;
  top: 0;
}

.swap svg {
  width: 16px;
  height: 16px;
}

.reset {
  position: absolute;
  left: 1px;
  bottom: 3px;
}

.reset svg {
  width: 14px;
  height: 14px;
}

.spectrum {
  width: 20px;
  border: 1px solid #96918f;
  background: linear-gradient(#d5481f 0 8%, #e8d20f 10% 22%, #2bff2b 24% 42%, #14e8f0 44% 56%, #5f8ea2 57% 60%, #2b2cff 61% 75%, #f000e0 78% 94%, #d5481f 96%);
}

.palette {
  display: grid;
  grid-template-columns: repeat(8, 1fr);
  grid-auto-rows: 9px;
  gap: 1px;
  margin: 0 1px 2px 2px;
  padding: 1px;
  background: #a9a3a3;
}

.palette button {
  background-size: 2px 2px;
}

.pager {
  display: grid;
  grid-template-columns: 1fr 1fr;
  gap: 1px;
  margin: 0 1px 4px 2px;
}

.pager button {
  display: grid;
  place-items: center;
  height: 17px;
  border: 1px solid #bcb6b6;
  background: linear-gradient(#f4f7f9 0 45%, #c5dae6 50%, #dfe9ef);
  box-shadow: inset 0 0 0 1px #fff;
}

.pager svg,
.scrollbar svg {
  width: 10px;
  height: 10px;
}

.tools {
  display: grid;
  grid-template-columns: repeat(3, 28px);
}

.tools .active {
  background: #fff content-box;
  padding: 1px;
  outline: 1px solid #444247;
  outline-offset: -2px;
  filter: drop-shadow(1px 1px 1px #96918f);
}

.palette-panel hr {
  height: 2px;
  margin: 6px 0 5px;
  border: none;
  background: linear-gradient(to right, transparent, #5f8ea2 30% 70%, transparent);
}

.scrollbar {
  display: flex;
  flex-direction: column;
  width: 16px;
  background: linear-gradient(to right, #dfe4e8, #f1f0ee 30%);
}

.scrollbar button {
  display: grid;
  place-items: center;
  height: 18px;
}

.track {
  flex: 1;
  min-height: 0;
}

.thumb {
  display: grid;
  place-items: center;
  width: 14px;
  height: 74%;
  margin-left: 1px;
  border: 1px solid #96918f;
  border-radius: 2px;
  background: linear-gradient(to right, #fff 0 40%, #c2dcec 50%, #9dc1d4 80%, #bcb6b6);
}

.thumb span {
  width: 7px;
  height: 8px;
  background: repeating-linear-gradient(#56707c 0 1px, #f1f6f9 1px 3px);
}

/* Status bar */
.statusbar {
  display: grid;
  grid-template-columns: 300fr 187fr 204fr 206fr;
  flex: none;
  height: 23px;
  border-top: 1px solid #96918f;
  background: #eeedeb;
  box-shadow: inset 0 1px #fff, inset 0 -1px #fff;
}

.statusbar span {
  padding: 3px 2px 0;
  line-height: 18px;
  border-right: 1px dotted #a9c8da;
}

.statusbar span:last-child {
  border-right: none;
  margin: 8px 2px 2px auto;
  width: 12px;
  background: radial-gradient(circle, #b5b2b0 1px, transparent 1px) 0 0 / 4px 4px;
  clip-path: polygon(100% 0, 100% 100%, 0 100%);
}
```
